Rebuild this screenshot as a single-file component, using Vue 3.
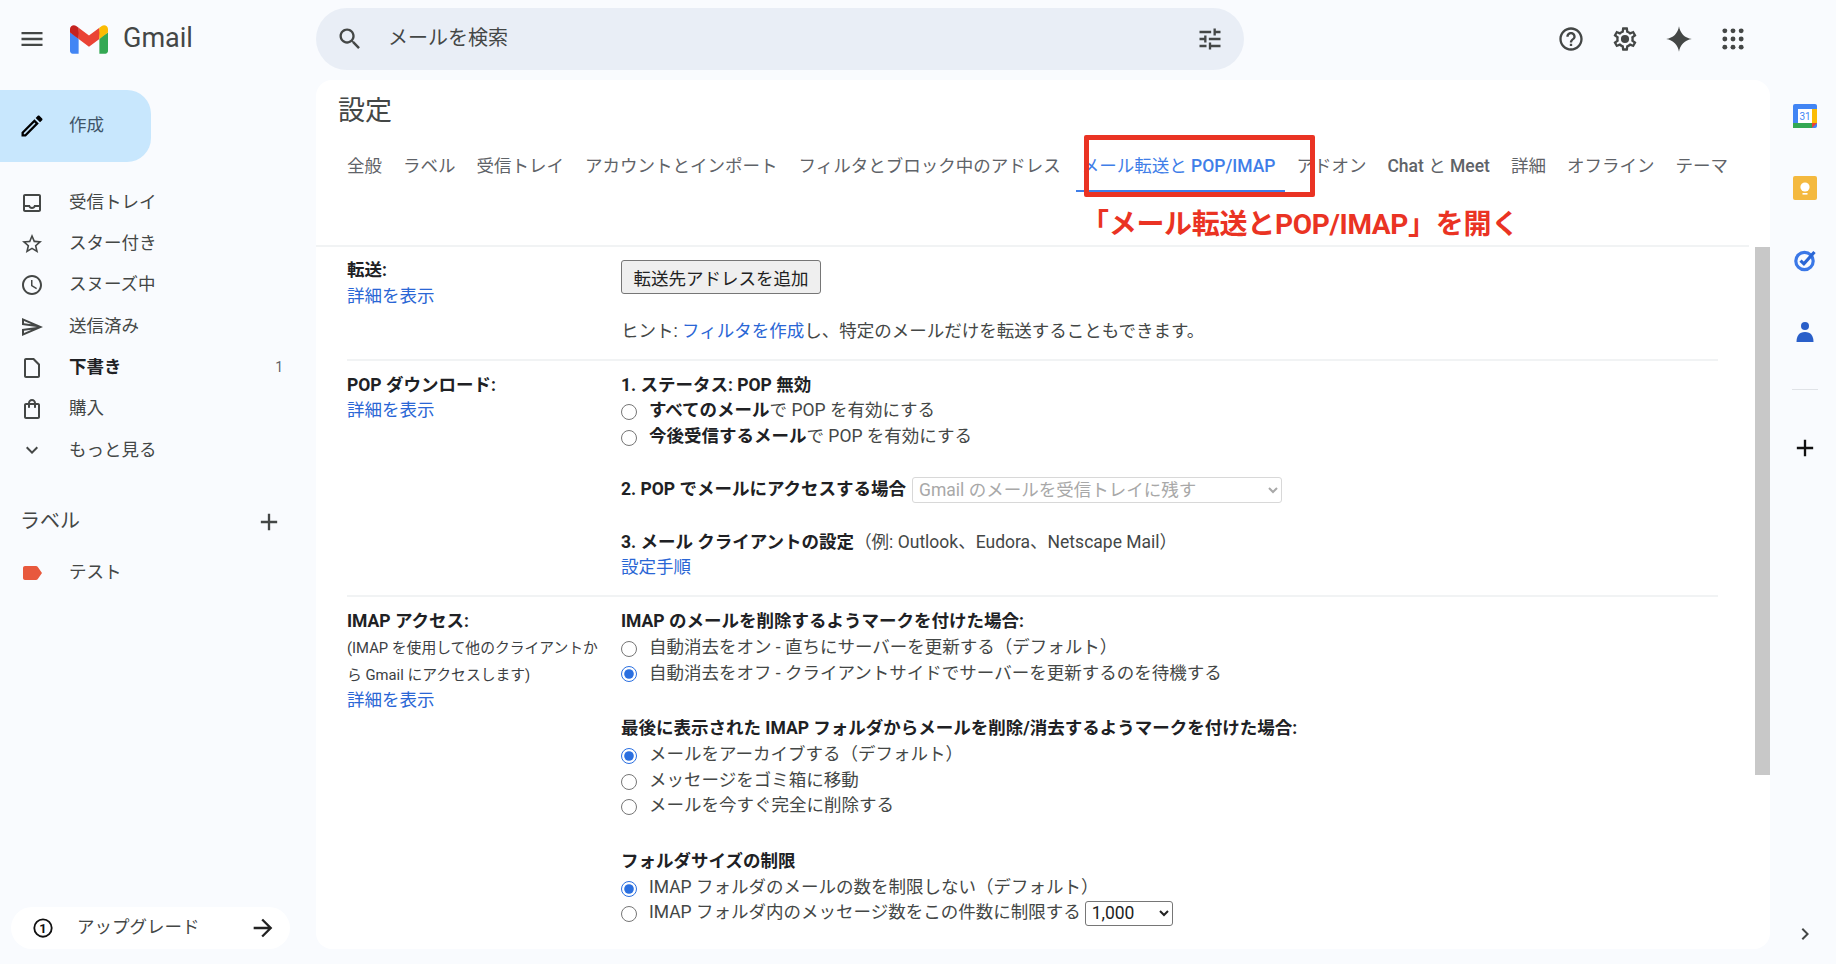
<script setup>
const mainNav = [
  { name: "受信トレイ", d: "M19 3H5c-1.1 0-2 .9-2 2v14c0 1.1.9 2 2 2h14c1.1 0 2-.9 2-2V5c0-1.1-.9-2-2-2zm0 16H5v-3h3.56c.69 1.19 1.97 2 3.44 2s2.75-.81 3.44-2H19v3zm0-5h-4.99c0 1.1-.9 2-2 2s-2-.9-2-2H5V5h14v9z" },
  { name: "スター付き", d: "M22 9.24l-7.19-.62L12 2 9.19 8.63 2 9.24l5.46 4.73L5.82 21 12 17.27 18.18 21l-1.63-7.03L22 9.24zM12 15.4l-3.76 2.27 1-4.28-3.32-2.88 4.38-.38L12 6.1l1.71 4.04 4.38.38-3.32 2.88 1 4.28L12 15.4z" },
  { name: "スヌーズ中", d: "M11.99 2C6.47 2 2 6.48 2 12s4.47 10 9.99 10C17.52 22 22 17.52 22 12S17.52 2 11.99 2zM12 20c-4.42 0-8-3.58-8-8s3.58-8 8-8 8 3.58 8 8-3.58 8-8 8zm.5-13H11v6l5.25 3.15.75-1.23-4.5-2.67z" },
  { name: "送信済み", d: "M4.01 6.03l7.51 3.22-7.52-1 .01-2.22m7.5 8.72L4 17.97v-2.22l7.51-1M2.01 3L2 10l15 2-15 2 .01 7L23 12 2.01 3z" },
  { name: "下書き", count: 1, bold: true, d: "M14 2H6c-1.1 0-1.99.9-1.99 2L4 20c0 1.1.89 2 1.99 2H18c1.1 0 2-.9 2-2V8l-6-6zm4 18H6V4h7l5 5v11z" },
  { name: "購入", d: "M18 6h-2c0-2.21-1.79-4-4-4S8 3.79 8 6H6c-1.1 0-2 .9-2 2v12c0 1.1.9 2 2 2h12c1.1 0 2-.9 2-2V8c0-1.1-.9-2-2-2zm-6-2c1.1 0 2 .9 2 2h-4c0-1.1.9-2 2-2zm6 16H6V8h2v2c0 .55.45 1 1 1s1-.45 1-1V8h4v2c0 .55.45 1 1 1s1-.45 1-1V8h2v12z" },
  { name: "もっと見る", d: "M16.59 8.59L12 13.17 7.41 8.59 6 10l6 6 6-6z" },
];

const tabs = ["全般", "ラベル", "受信トレイ", "アカウントとインポート", "フィルタとブロック中のアドレス"];
const tabsAfter = ["詳細", "オフライン"];

const imapDelete = [
  { text: "自動消去をオン - 直ちにサーバーを更新する（デフォルト）" },
  { text: "自動消去をオフ - クライアントサイドでサーバーを更新するのを待機する", checked: true },
];
const imapExpunge = [
  { text: "メールをアーカイブする（デフォルト）", checked: true },
  { text: "メッセージをゴミ箱に移動" },
  { text: "メールを今すぐ完全に削除する" },
];
</script>

<template>
  <div class="page">
    <header class="topbar">
      <div class="brand">
        <svg class="icon menu" viewBox="0 0 24 24"><path d="M3 18h18v-2H3v2zm0-5h18v-2H3v2zm0-7v2h18V6H3z" /></svg>
        <svg class="logo" viewBox="0 0 256 193">
          <path fill="#4285F4" d="M58.182 192.05V93.14L27.507 65.077 0 49.504v125.091c0 9.658 7.825 17.455 17.455 17.455h40.727Z" />
          <path fill="#34A853" d="M197.818 192.05h40.727c9.659 0 17.455-7.826 17.455-17.455V49.505l-31.156 17.837-27.026 25.798v98.91Z" />
          <path fill="#EA4335" d="m58.182 93.14-4.174-38.647 4.174-36.989L128 69.868l69.818-52.364 4.669 34.992-4.669 40.644L128 145.504z" />
          <path fill="#FBBC04" d="M197.818 17.504V93.14L256 49.504V26.231c0-21.585-24.64-33.89-41.89-20.945l-16.292 12.218Z" />
          <path fill="#C5221F" d="m0 49.504 26.759 20.07L58.182 93.14V17.504L41.89 5.286C24.61-7.66 0 4.646 0 26.23v23.273Z" />
        </svg>
        <span class="brandName">Gmail</span>
      </div>
      <div class="search">
        <svg class="icon searchIcon" viewBox="0 0 24 24"><path d="M15.5 14h-.79l-.28-.27C15.41 12.59 16 11.11 16 9.5 16 5.91 13.09 3 9.5 3S3 5.91 3 9.5 5.91 16 9.5 16c1.61 0 3.09-.59 4.23-1.57l.27.28v.79l5 4.99L20.49 19l-4.99-5zm-6 0C7.01 14 5 11.99 5 9.5S7.01 5 9.5 5 14 7.01 14 9.5 11.99 14 9.5 14z" /></svg>
        <span class="searchText">メールを検索</span>
        <svg class="icon tune" viewBox="0 0 24 24"><path d="M3 17v2h6v-2H3zM3 5v2h10V5H3zm10 16v-2h8v-2h-8v-2h-2v6h2zM7 9v2H3v2h4v2h2V9H7zm14 4v-2H11v2h10zm-6-4h2V7h4V5h-4V3h-2v6z" /></svg>
      </div>
      <div class="topActions">
        <svg class="icon" viewBox="0 0 24 24"><path d="M11 18h2v-2h-2v2zm1-16C6.48 2 2 6.48 2 12s4.48 10 10 10 10-4.48 10-10S17.52 2 12 2zm0 18c-4.41 0-8-3.59-8-8s3.59-8 8-8 8 3.59 8 8-3.59 8-8 8zm0-14c-2.21 0-4 1.79-4 4h2c0-1.1.9-2 2-2s2 .9 2 2c0 2-3 1.75-3 5h2c0-2.25 3-2.5 3-5 0-2.21-1.79-4-4-4z" /></svg>
        <svg class="icon" viewBox="0 0 24 24"><path d="M19.43 12.98c.04-.32.07-.64.07-.98 0-.34-.03-.66-.07-.98l2.11-1.65c.19-.15.24-.42.12-.64l-2-3.46c-.09-.16-.26-.25-.44-.25-.06 0-.12.01-.17.03l-2.49 1c-.52-.4-1.08-.73-1.69-.98l-.38-2.65C14.46 2.18 14.25 2 14 2h-4c-.25 0-.46.18-.49.42l-.38 2.65c-.61.25-1.17.59-1.69.98l-2.49-1c-.06-.02-.12-.03-.18-.03-.17 0-.34.09-.43.25l-2 3.46c-.13.22-.07.49.12.64l2.11 1.65c-.04.32-.07.65-.07.98 0 .33.03.66.07.98l-2.11 1.65c-.19.15-.24.42-.12.64l2 3.46c.09.16.26.25.44.25.06 0 .12-.01.17-.03l2.49-1c.52.4 1.08.73 1.69.98l.38 2.65c.03.24.24.42.49.42h4c.25 0 .46-.18.49-.42l.38-2.65c.61-.25 1.17-.59 1.69-.98l2.49 1c.06.02.12.03.18.03.17 0 .34-.09.43-.25l2-3.46c.12-.22.07-.49-.12-.64l-2.11-1.65zm-1.98-1.71c.04.31.05.52.05.73 0 .21-.02.43-.05.73l-.14 1.13.89.7 1.08.84-.7 1.21-1.27-.51-1.04-.42-.9.68c-.43.32-.84.56-1.25.73l-1.06.43-.16 1.13-.2 1.35h-1.4l-.19-1.35-.16-1.13-1.06-.43c-.43-.18-.83-.41-1.23-.71l-.91-.7-1.06.43-1.27.51-.7-1.21 1.08-.84.89-.7-.14-1.13c-.03-.31-.05-.54-.05-.74s.02-.43.05-.73l.14-1.13-.89-.7-1.08-.84.7-1.21 1.27.51 1.04.42.9-.68c.43-.32.84-.56 1.25-.73l1.06-.43.16-1.13.2-1.35h1.39l.19 1.35.16 1.13 1.06.43c.43.18.83.41 1.23.71l.91.7 1.06-.43 1.27-.51.7 1.21-1.07.85-.89.7.14 1.13zM12 8.5a3.5 3.5 0 1 0 0 7 3.5 3.5 0 0 0 0-7z" /></svg>
        <svg class="icon" viewBox="0 0 24 24"><path d="M12 1C12.9 7 17 11.1 23 12 17 12.9 12.9 17 12 23 11.1 17 7 12.9 1 12 7 11.1 11.1 7 12 1z" /></svg>
        <svg class="icon" viewBox="0 0 24 24">
          <circle v-for="c in 9" :key="c" :cx="5 + ((c - 1) % 3) * 7" :cy="5 + Math.floor((c - 1) / 3) * 7" r="2.1" />
        </svg>
      </div>
    </header>

    <div class="content">
      <aside class="sidebar">
        <div class="compose">
          <svg class="icon" viewBox="0 0 24 24"><path fill="#000" d="M14.06 9.02l.92.92L5.92 19H5v-.92l9.06-9.06M17.66 3c-.25 0-.51.1-.7.29l-1.83 1.83 3.75 3.75 1.83-1.83c.39-.39.39-1.02 0-1.41l-2.34-2.34c-.2-.2-.45-.29-.71-.29zm-3.6 3.19L3 17.25V21h3.75L17.81 9.94l-3.75-3.75z" /></svg>
          <span>作成</span>
        </div>
        <nav class="nav">
          <div v-for="item in mainNav" :key="item.name" class="navItem" :class="{ bold: item.bold }">
            <svg class="icon" viewBox="0 0 24 24"><path :d="item.d" /></svg>
            <span class="navName">{{ item.name }}</span>
            <span v-if="item.count" class="navCount">{{ item.count }}</span>
          </div>
        </nav>
        <div class="labelHead">
          <span>ラベル</span>
          <svg class="icon" viewBox="0 0 24 24"><path d="M19 13h-6v6h-2v-6H5v-2h6V5h2v6h6v2z" /></svg>
        </div>
        <div class="navItem">
          <svg class="icon" viewBox="0 0 24 24"><path fill="#e8593d" d="M17.63 5.84C17.27 5.33 16.67 5 16 5L5 5.01C3.9 5.01 3 5.9 3 7v10c0 1.1.9 1.99 2 1.99L16 19c.67 0 1.27-.33 1.63-.84L22 12l-4.37-6.16z" /></svg>
          <span class="navName">テスト</span>
        </div>
        <div class="upgrade">
          <svg class="upgradeNum" viewBox="0 0 24 24">
            <circle cx="12" cy="12" r="9.5" fill="none" stroke="#111" stroke-width="2" />
            <text x="12" y="17" text-anchor="middle" font-size="14" font-weight="700" fill="#111">1</text>
          </svg>
          <span class="upgradeText">アップグレード</span>
          <svg class="icon arrow" viewBox="0 0 24 24"><path fill="#222" d="M12 4l-1.41 1.41L16.17 11H4v2h12.17l-5.58 5.59L12 20l8-8z" /></svg>
        </div>
      </aside>

      <main class="panel">
        <h1 class="title">設定</h1>
        <div class="tabs">
          <span v-for="tab in tabs" :key="tab" class="tab">{{ tab }}</span>
          <span class="tab active">メール転送と <b>POP/IMAP</b></span>
          <span class="tab">アドオン</span>
          <span class="tab"><b>Chat</b> と <b>Meet</b></span>
          <span v-for="tab in tabsAfter" :key="tab" class="tab">{{ tab }}</span>
          <span class="tab">テーマ</span>
          <div class="callBox"></div>
          <div class="callText">「メール転送とPOP/IMAP」を開く</div>
        </div>

        <div class="scrollArea">
          <div class="settings">
            <section class="row rowForward">
              <div class="rowLabel">
                <div class="strong">転送:</div>
                <a class="link">詳細を表示</a>
              </div>
              <div class="rowValue">
                <button class="addBtn">転送先アドレスを追加</button>
                <div class="hint">ヒント: <a class="link">フィルタを作成</a>し、特定のメールだけを転送することもできます。</div>
              </div>
            </section>

            <section class="row">
              <div class="rowLabel">
                <div class="strong">POP ダウンロード:</div>
                <a class="link">詳細を表示</a>
              </div>
              <div class="rowValue">
                <div class="strong">1. ステータス: POP 無効</div>
                <label class="radio"><input type="radio" name="pop" /><span><b>すべてのメール</b>で POP を有効にする</span></label>
                <label class="radio"><input type="radio" name="pop" /><span><b>今後受信するメール</b>で POP を有効にする</span></label>
                <div class="block strong popAccess">
                  2. POP でメールにアクセスする場合
                  <select class="popSelect" disabled>
                    <option>Gmail のメールを受信トレイに残す</option>
                  </select>
                </div>
                <div class="block">
                  <span class="strong">3. メール クライアントの設定</span>（例: Outlook、Eudora、Netscape Mail）
                </div>
                <a class="link">設定手順</a>
              </div>
            </section>

            <section class="row">
              <div class="rowLabel">
                <div class="strong">IMAP アクセス:</div>
                <div class="small">(IMAP を使用して他のクライアントか<br />ら Gmail にアクセスします)</div>
                <a class="link">詳細を表示</a>
              </div>
              <div class="rowValue">
                <div class="strong">IMAP のメールを削除するようマークを付けた場合:</div>
                <label v-for="o in imapDelete" :key="o.text" class="radio">
                  <input type="radio" name="del" :checked="o.checked" /><span>{{ o.text }}</span>
                </label>
                <div class="strong block blockTall">最後に表示された IMAP フォルダからメールを削除/消去するようマークを付けた場合:</div>
                <label v-for="o in imapExpunge" :key="o.text" class="radio">
                  <input type="radio" name="exp" :checked="o.checked" /><span>{{ o.text }}</span>
                </label>
                <div class="strong block blockTall">フォルダサイズの制限</div>
                <label class="radio"><input type="radio" name="size" checked /><span>IMAP フォルダのメールの数を制限しない（デフォルト）</span></label>
                <label class="radio">
                  <input type="radio" name="size" /><span>IMAP フォルダ内のメッセージ数をこの件数に制限する</span>
                  <select class="sizeSelect"><option>1,000</option></select>
                </label>
              </div>
            </section>
          </div>
          <div class="scrollTrack"><div class="scrollThumb"></div></div>
        </div>
      </main>

      <aside class="rail">
        <svg class="railIcon" viewBox="0 0 24 24">
          <rect x="0" y="0" width="24" height="24" rx="2" fill="#4285f4" />
          <rect x="5" y="5" width="14" height="14" fill="#fff" />
          <rect x="19" y="5" width="5" height="14" fill="#fbbc04" />
          <rect x="0" y="19" width="19" height="5" fill="#34a853" />
          <path d="M19 19h5l-5 5z" fill="#ea4335" />
          <text x="12" y="16" text-anchor="middle" font-size="10" fill="#4285f4">31</text>
        </svg>
        <svg class="railIcon" viewBox="0 0 24 24">
          <rect width="24" height="24" rx="2" fill="#f4b93f" />
          <circle cx="12" cy="11" r="4.6" fill="#fff" />
          <rect x="9.5" y="17" width="5" height="1.6" fill="#fff" />
        </svg>
        <svg class="railIcon" viewBox="0 0 24 24">
          <circle cx="11.5" cy="13" r="8.7" fill="none" stroke="#3b78e7" stroke-width="3.2" />
          <path d="M7.5 12.6l3.4 3.2L21.5 4" fill="none" stroke="#2a66d5" stroke-width="3.2" />
        </svg>
        <svg class="railIcon" viewBox="0 0 24 24">
          <circle cx="12" cy="6" r="4" fill="#2a5fc9" />
          <path d="M3.5 22c0-6 2.5-10 8.5-10s8.5 4 8.5 10z" fill="#2a5fc9" />
        </svg>
        <div class="railLine"></div>
        <svg class="icon railPlus" viewBox="0 0 24 24"><path fill="#111" d="M19 13h-6v6h-2v-6H5v-2h6V5h2v6h6v2z" /></svg>
        <svg class="icon railArrow" viewBox="0 0 24 24"><path d="M10 6L8.59 7.41 13.17 12l-4.58 4.59L10 18l6-6z" /></svg>
      </aside>
    </div>
  </div>
</template>

<style>
body {
  margin: 0;
  background: #f9fbfe;
}
</style>

<style scoped>
.page {
  width: 1836px;
  height: 964px;
  overflow: hidden;
  display: flex;
  flex-direction: column;
  font-family: Roboto, "Noto Sans CJK JP", sans-serif;
  font-size: 17.5px;
  line-height: 25.7px;
  color: #444746;
  background: #f9fbfe;
}

.icon {
  width: 28px;
  height: 28px;
  fill: #444746;
  flex: none;
}

/* 상단 바 */
.topbar {
  height: 80px;
  flex: none;
  display: flex;
  align-items: center;
  padding-bottom: 2px;
  box-sizing: border-box;
}

.brand {
  width: 316px;
  flex: none;
  display: flex;
  align-items: center;
  padding-left: 18px;
  box-sizing: border-box;
}

.logo {
  width: 38px;
  height: 29px;
  margin-left: 24px;
}

.brandName {
  margin-left: 15px;
  font-size: 27px;
  color: #444746;
}

.search {
  width: 928px;
  height: 62px;
  flex: none;
  display: flex;
  align-items: center;
  padding: 0 20px;
  box-sizing: border-box;
  background: #e9eef6;
  border-radius: 31px;
}

.searchText {
  flex: 1;
  margin-left: 24px;
  font-size: 20px;
  color: #444746;
}

.topActions {
  margin-left: 313px;
  display: flex;
  align-items: center;
  gap: 26px;
}

.content {
  flex: 1;
  min-height: 0;
  display: flex;
  padding-bottom: 15px;
}

/* 사이드바 */
.sidebar {
  width: 316px;
  flex: none;
  display: flex;
  flex-direction: column;
}

.compose {
  width: 151px;
  height: 72px;
  margin-top: 10px;
  display: flex;
  align-items: center;
  padding-left: 18px;
  gap: 23px;
  box-sizing: border-box;
  background: #c8e7fd;
  border-radius: 0 24px 24px 0;
  color: #3f5468;
}

.nav {
  margin-top: 20px;
}

.navItem {
  height: 41.3px;
  display: flex;
  align-items: center;
  padding: 0 33px 0 20px;
}

.navItem .icon {
  width: 24px;
  height: 24px;
}

.navName {
  margin-left: 25px;
  flex: 1;
}

.navItem.bold {
  font-weight: 700;
  color: #202124;
}

.navCount {
  font-size: 14px;
  font-weight: 400;
  color: #5f6368;
}

.labelHead {
  margin-top: 31px;
  margin-bottom: 10px;
  display: flex;
  align-items: center;
  justify-content: space-between;
  padding: 0 33px 0 20px;
  height: 40px;
  font-size: 20px;
}

.upgrade {
  margin: auto 0 0 11px;
  width: 279px;
  height: 42px;
  display: flex;
  align-items: center;
  background: #fff;
  border-radius: 21px;
}

.upgradeNum {
  width: 22px;
  height: 22px;
  margin-left: 21px;
  font-family: Roboto, sans-serif;
}

.upgradeText {
  margin-left: 23px;
  flex: 1;
}

.arrow {
  margin-right: 13px;
}

/* 설정 패널 */
.panel {
  width: 1454px;
  flex: none;
  display: flex;
  flex-direction: column;
  background: #fff;
  border-radius: 16px;
  overflow: hidden;
}

.title {
  margin: 0;
  height: 60px;
  padding: 15px 0 0 22px;
  box-sizing: border-box;
  font-size: 27px;
  line-height: 32px;
  font-weight: 400;
  color: #444746;
}

.tabs {
  position: relative;
  height: 105px;
  flex: none;
  margin-right: 21px;
  padding-left: 31px;
  display: flex;
  flex-wrap: wrap;
  align-content: flex-start;
  column-gap: 21px;
  border-bottom: 2px solid #f1f3f4;
  box-sizing: content-box;
  width: 1402px;
}

.tab {
  position: relative;
  height: 52px;
  line-height: 52px;
  white-space: nowrap;
  color: #5f6368;
}

.tab b {
  font-weight: 500;
}

.tab.active {
  color: #3f7ee8;
}

.tab.active::after {
  content: "";
  position: absolute;
  left: -6px;
  right: -10px;
  bottom: 0;
  height: 2px;
  background: #3f7ee8;
}

.callBox {
  position: absolute;
  left: 768px;
  top: -5px;
  width: 231px;
  height: 62px;
  box-sizing: border-box;
  border: 5px solid #ea3323;
  border-radius: 2px;
}

.callText {
  position: absolute;
  left: 765px;
  top: 68px;
  font-size: 28px;
  line-height: 34px;
  font-weight: 700;
  letter-spacing: -0.3px;
  white-space: nowrap;
  color: #ea3323;
}

.scrollArea {
  flex: 1;
  min-height: 0;
  display: flex;
}

.settings {
  flex: 1;
  min-width: 0;
  padding: 0 37px 0 31px;
  margin-right: 0;
}

.scrollTrack {
  width: 15px;
  margin-left: 0;
  flex: none;
}

.scrollThumb {
  height: 528px;
  background: #c8c8c8;
}

.row {
  display: flex;
  padding: 12px 0 14px;
  border-bottom: 2px solid #f1f3f4;
}

.row:last-child {
  border-bottom: none;
}

.rowForward {
  padding-top: 11px;
}

.rowLabel {
  width: 274px;
  flex: none;
}

.rowValue {
  flex: 1;
  min-width: 0;
}

.strong,
.radio b {
  font-weight: 700;
  color: #202124;
}

.link {
  display: block;
  color: #2a66d5;
}

.hint .link {
  display: inline;
}

.small {
  font-size: 14.8px;
  line-height: 26.7px;
  color: #3c4043;
}

.addBtn {
  display: block;
  width: 200px;
  height: 34px;
  margin-top: 2px;
  padding: 0;
  font-family: inherit;
  font-size: 17.5px;
  color: #222;
  background: #efefef;
  border: 1px solid #767676;
  border-radius: 3px;
}

.hint {
  margin-top: 25px;
}

.radio {
  display: flex;
  align-items: center;
  gap: 12px;
  height: 25.7px;
}

.radio input {
  width: 16px;
  height: 16px;
  margin: 2px 0 0;
  flex: none;
  accent-color: #2a6fe0;
}

.radio select {
  margin-left: -8px;
}

.block {
  margin-top: 27px;
}

.blockTall {
  margin-top: 30px;
}

.popAccess {
  display: flex;
  align-items: center;
  gap: 6px;
}

.popSelect {
  width: 370px;
  height: 26px;
  padding: 0 2px;
  font-family: inherit;
  font-size: 17.5px;
  color: #a8a8a8;
  background: #fff;
  border: 1px solid #d8d8d8;
  border-radius: 3px;
  opacity: 1;
}

.sizeSelect {
  width: 88px;
  height: 25px;
  padding: 0 2px;
  font-family: inherit;
  font-size: 17.5px;
  color: #222;
  background: #fff;
  border: 1px solid #767676;
  border-radius: 3px;
}

/* 오른쪽 레일 */
.rail {
  flex: 1;
  display: flex;
  flex-direction: column;
  align-items: center;
  padding: 24px 0 0 4px;
  box-sizing: border-box;
}

.railIcon {
  width: 24px;
  height: 24px;
  margin-bottom: 48px;
  font-family: Roboto, sans-serif;
}

.railLine {
  width: 26px;
  height: 1px;
  background: #e0e3e7;
  margin-top: -3px;
}

.railPlus {
  margin-top: 44px;
}

.railArrow {
  width: 24px;
  height: 24px;
  margin-top: auto;
  margin-bottom: 3px;
}
</style>
